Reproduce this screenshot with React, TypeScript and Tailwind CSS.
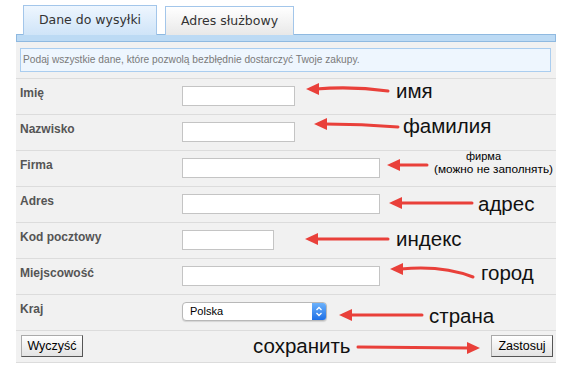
import React from 'react';

const rows = [
  { label: 'Imię', w: 'w-[113px]' },
  { label: 'Nazwisko', w: 'w-[113px]' },
  { label: 'Firma', w: 'w-[198px]' },
  { label: 'Adres', w: 'w-[198px]' },
  { label: 'Kod pocztowy', w: 'w-[92px]' },
  { label: 'Miejscowość', w: 'w-[198px]' },
];

// arrows: tail -> control -> tip
const arrows = [
  { d: 'M388,91 Q352,86 316,89', tip: [306, 89], dir: -1 },
  { d: 'M398,127 Q362,124 325,124', tip: [314, 124], dir: -1 },
  { d: 'M427,165 L398,165', tip: [387, 165], dir: -1 },
  { d: 'M472,203 L400,203', tip: [389, 203], dir: -1 },
  { d: 'M388,239 L316,239', tip: [305, 239], dir: -1 },
  { d: 'M473,277 Q442,265 401,269', tip: [390, 269], dir: -1 },
  { d: 'M422,315 L350,315', tip: [339, 315], dir: -1 },
  { d: 'M358,347 L469,348', tip: [480, 348], dir: 1 },
];

function Arrows() {
  return (
    <svg className="pointer-events-none absolute inset-0" width="572" height="378">
      {arrows.map((a, i) => {
        const [x, y] = a.tip;
        const bx = x - a.dir * 13;
        return (
          <g key={i}>
            <path d={a.d} stroke="#e9403a" strokeWidth="3" fill="none" strokeLinecap="round" />
            <polygon points={`${x},${y} ${bx},${y - 6} ${bx},${y + 6}`} fill="#e9403a" />
          </g>
        );
      })}
    </svg>
  );
}

function Note({ text, className }: { text: string; className: string }) {
  return <span className={`absolute text-[20.5px] leading-[21px] text-[#111] whitespace-nowrap ${className}`}>{text}</span>;
}

export default function App() {
  return (
    <div className="relative h-[378px] w-[572px] overflow-hidden bg-white font-['Liberation_Sans',Arial,sans-serif]">
      <div className="ml-[16px] w-[540px] pt-[5px]">
        <div className="flex items-end gap-[8px] pl-[7px] font-['DejaVu_Sans',Verdana,sans-serif] text-[12.5px] text-[#333]">
          <div className="-mb-px flex h-[30px] w-[134px] items-center justify-center border border-b-0 border-[#a3c6ea] bg-gradient-to-b from-[#eef6fe] to-[#cfe4f8]">
            Dane do wysyłki
          </div>
          <div className="-mb-px flex h-[29px] w-[129px] items-center justify-center border border-b-0 border-[#a3c6ea] bg-gradient-to-b from-white to-[#e8e8e8]">
            Adres służbowy
          </div>
        </div>
        <div className="h-[8px] border border-[#8fb9e0] bg-[#bcdaf4]" />
        <div className="bg-[#f1f1f1] pt-[6px]">
          <div className="ml-[4px] mr-[5px] flex h-[24px] items-center border border-[#aacdef] bg-[#eef6fe] pl-[2px] text-[10.2px] text-[#7a7a7a]">
            Podaj wszystkie dane, które pozwolą bezbłędnie dostarczyć Twoje zakupy.
          </div>
          <div className="mt-[6px]">
            {rows.map((r) => (
              <div key={r.label} className="flex h-[36px] items-start border-t border-[#dcdcdc]">
                <div className="w-[166px] pl-[4px] pt-[7px] text-[12px] font-bold leading-[14px] text-[#555]">{r.label}</div>
                <div className={`mt-[7px] h-[20px] border border-[#c4c4c4] bg-white ${r.w}`} />
              </div>
            ))}
            <div className="flex h-[36px] items-start border-t border-[#dcdcdc]">
              <div className="w-[166px] pl-[4px] pt-[7px] text-[12px] font-bold leading-[14px] text-[#555]">Kraj</div>
              <div className="mt-[7px] flex h-[19px] w-[145px] items-center overflow-hidden rounded-[4px] border border-[#b8b8b8] bg-white shadow-[0_1px_1px_rgba(0,0,0,0.12)]">
                <span className="flex-1 pl-[7px] text-[11px] text-black">Polska</span>
                <span className="flex h-full w-[14px] items-center justify-center bg-gradient-to-b from-[#6bb1fb] to-[#1d6fe6]">
                  <svg width="8" height="11" viewBox="0 0 8 11">
                    <path d="M1.5 4 L4 1.5 L6.5 4 M1.5 7 L4 9.5 L6.5 7" stroke="white" strokeWidth="1.3" fill="none" />
                  </svg>
                </span>
              </div>
            </div>
            <div className="flex h-[33px] items-start justify-between border-y border-[#dcdcdc] pl-[5px] pr-[3px] pt-[4px]">
              <button className="h-[22px] w-[62px] border border-[#aaa] border-b-[#555] border-r-[#555] bg-gradient-to-b from-white to-[#e3e3e3] text-[12.5px] text-black">
                Wyczyść
              </button>
              <button className="h-[22px] w-[62px] border border-[#aaa] border-b-[#555] border-r-[#555] bg-gradient-to-b from-white to-[#e3e3e3] text-[12.5px] text-black">
                Zastosuj
              </button>
            </div>
          </div>
        </div>
      </div>

      <Arrows />
      <Note text="имя" className="left-[396px] top-[80px]" />
      <Note text="фамилия" className="left-[403px] top-[115px]" />
      <span className="absolute left-[466px] top-[150px] text-[11px] leading-[12px] text-black">фирма</span>
      <span className="absolute left-[434px] top-[163px] whitespace-nowrap text-[11.8px] leading-[13px] text-black">(можно не заполнять)</span>
      <Note text="адрес" className="left-[478px] top-[193px]" />
      <Note text="индекс" className="left-[396px] top-[228px]" />
      <Note text="город" className="left-[481px] top-[262px]" />
      <Note text="страна" className="left-[429px] top-[305px]" />
      <Note text="сохранить" className="left-[253px] top-[335px]" />
    </div>
  );
}
